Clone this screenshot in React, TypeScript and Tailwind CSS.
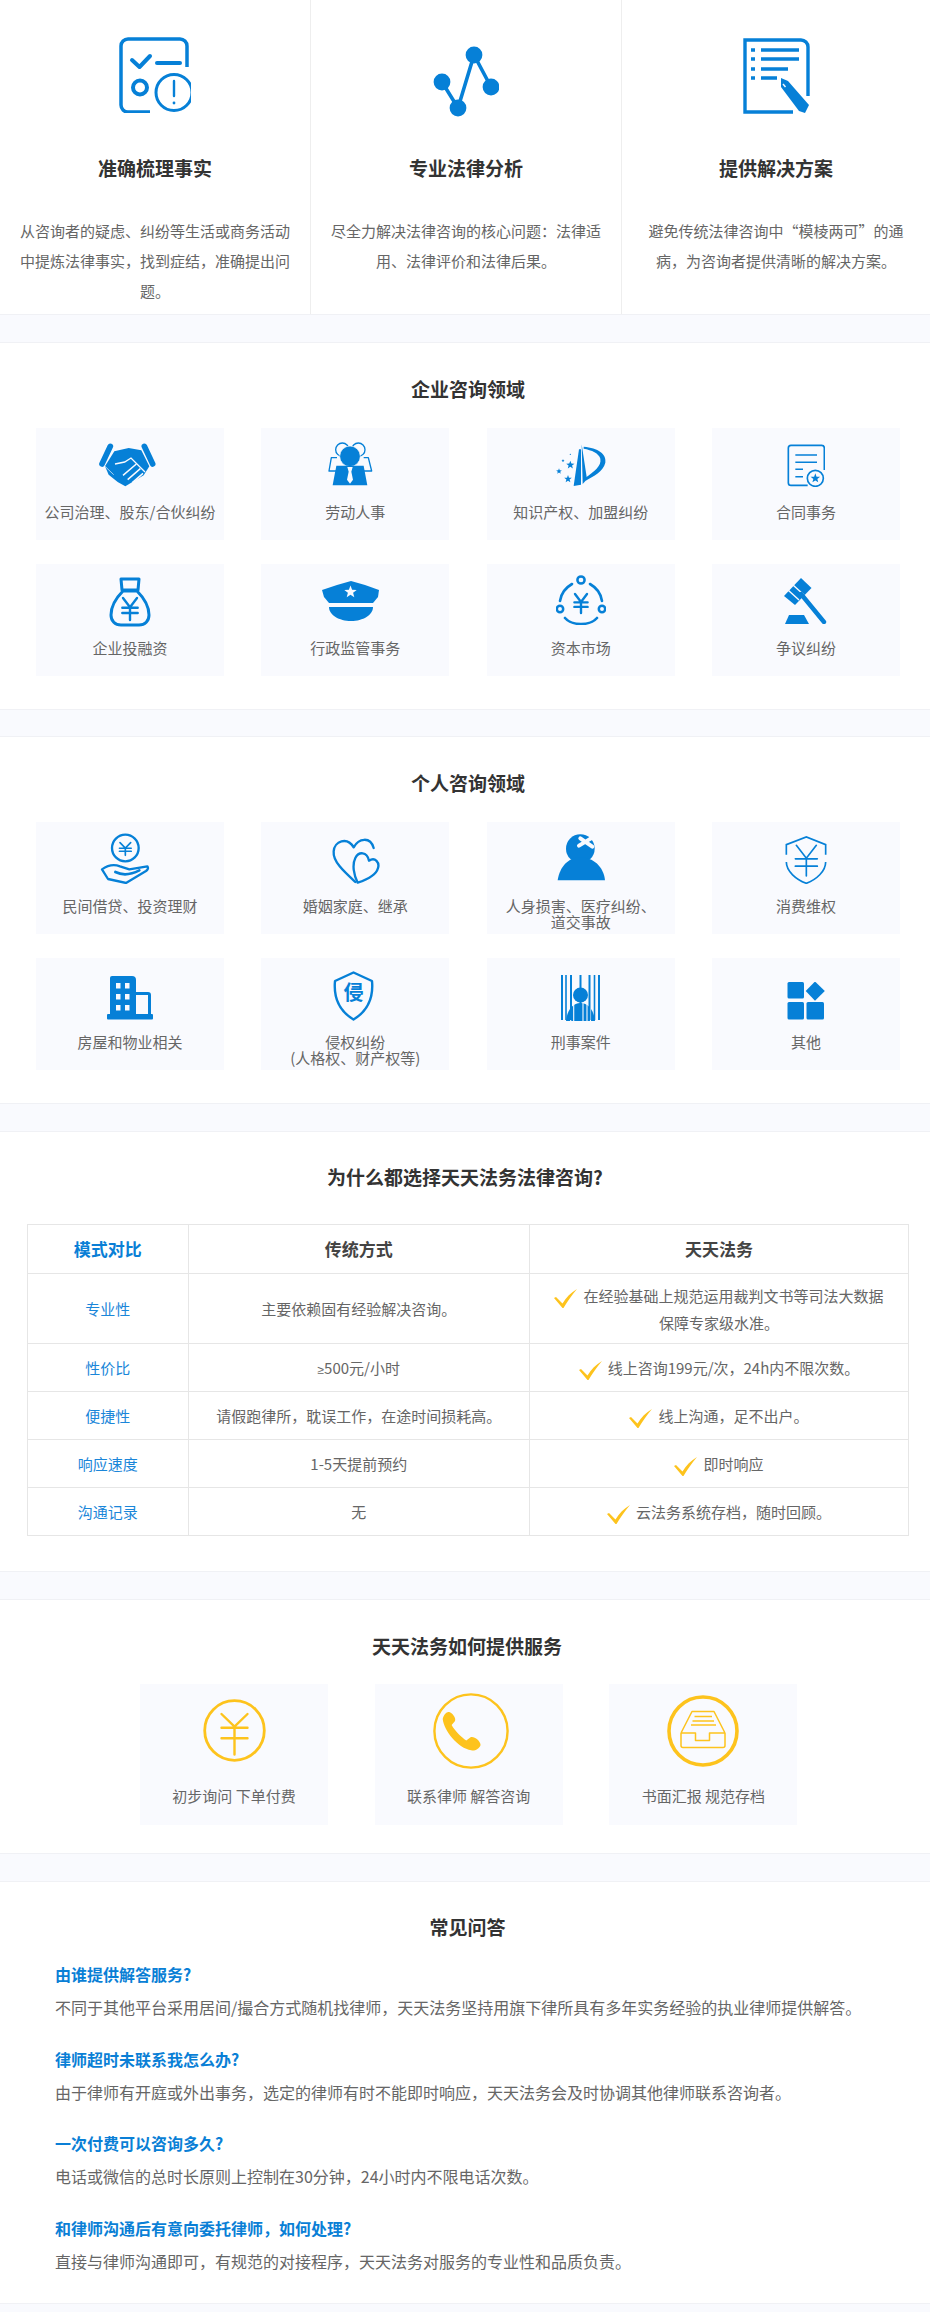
import React from "react";

const B = "#0680d7";
const Y = "#fdc31d";
const BG = "#f9fafe";

function star(cx: number, cy: number, r: number) {
  const pts: string[] = [];
  for (let i = 0; i < 10; i++) {
    const a = -Math.PI / 2 + (i * Math.PI) / 5;
    const rr = i % 2 === 0 ? r : r * 0.42;
    pts.push(`${(cx + rr * Math.cos(a)).toFixed(1)},${(cy + rr * Math.sin(a)).toFixed(1)}`);
  }
  return pts.join(" ");
}

type SP = { className?: string };

const Accurate = ({ className }: SP) => (
  <svg className={className} width="72" height="76" viewBox="0 0 72 76" fill="none" stroke={B} strokeLinecap="round" strokeLinejoin="round">
    <path d="M68 30V9a7 7 0 0 0-7-7H9a7 7 0 0 0-7 7v59a7 7 0 0 0 7 7h22" strokeWidth="3.5" strokeLinecap="butt" />
    <path d="M13 23l7.5 7L31 19" strokeWidth="4" />
    <path d="M38 26h23" strokeWidth="4" />
    <circle cx="21" cy="50.5" r="7" strokeWidth="4" />
    <circle cx="55" cy="55.5" r="18" strokeWidth="3" />
    <path d="M55 44v15" strokeWidth="2.4" />
    <circle cx="55" cy="66" r="1.4" fill={B} stroke="none" />
  </svg>
);
const Graph = ({ className }: SP) => (
  <svg className={className} width="66" height="72" viewBox="0 0 66 72" fill={B} stroke={B}>
    <path d="M9 36l16 26 16-53 17 32" fill="none" strokeWidth="3.6" />
    <g stroke="none">
      <circle cx="41" cy="9" r="8.4" />
      <circle cx="9" cy="36" r="8.4" />
      <circle cx="58" cy="41" r="8.4" />
      <circle cx="25" cy="62" r="8.4" />
    </g>
  </svg>
);
const Doc = ({ className }: SP) => (
  <svg className={className} width="67" height="76" viewBox="0 0 67 76" fill="none" stroke={B}>
    <path d="M50 74H2V2h56a7 7 0 0 1 7 7v49" strokeWidth="3.4" />
    <path d="M8 12h4M18 12h38M8 21h4M18 21h38M8 31h4M18 31h27M8 40h4M18 40h16" strokeWidth="3.6" />
    <path d="M38 40l7 3 21 24-4 8-6-2-18-24z" fill={B} stroke="none" />
    <path d="M40 46l2.5 3" stroke={BG} strokeWidth="1.4" />
  </svg>
);

const Handshake = ({ className }: SP) => (
  <svg className={className} width="60" height="45" viewBox="200 55 180 135" fill={B}>
    <path d="M240 65L215 118M342 65L367 118" stroke={B} strokeWidth="17" strokeLinecap="round" />
    <path d="M252 80L295 70L333 77L357 125L340 152L285 185L262 172L235 150L224 125Z" />
    <path d="M254 118L283 112L302 100L344 142" fill="none" stroke={BG} strokeWidth="4" />
    <path d="M278 152L318 118M292 165L330 132M306 174L338 146" fill="none" stroke={BG} strokeWidth="4.5" />
    <path d="M224 125L250 150" fill="none" stroke={BG} strokeWidth="2" />
  </svg>
);
const Worker = ({ className }: SP) => (
  <svg className={className} width="46" height="45" viewBox="892 48 138 135" fill="none" stroke={B}>
    <circle cx="938" cy="74" r="20" strokeWidth="4" />
    <circle cx="986" cy="74" r="20" strokeWidth="4" />
    <path d="M922 98H905L898 138H920M1002 98H1016L1026 138H1002" strokeWidth="4" strokeLinejoin="round" />
    <circle cx="961" cy="94" r="31" fill={B} stroke={BG} strokeWidth="2" />
    <path d="M920 122H1002L1013 181H909Z" fill={B} stroke="none" />
    <path d="M953 126H969L965 140L970 164L961 176L952 164L957 140Z" fill={BG} stroke="none" />
  </svg>
);
const IP = ({ className }: SP) => (
  <svg className={className} width="52" height="43" viewBox="166 42 156 129" fill={B}>
    <path d="M238 58L222 168L244 164V58Z" />
    <path d="M246 43L249 162L262 148Z" />
    <path d="M252 50C295 54 322 72 317 98C310 125 282 138 258 152L256 144C284 124 306 108 302 86C298 70 276 60 252 56Z" />
    <polygon points={star(212, 105, 13)} />
    <polygon points={star(205, 147, 12)} />
    <polygon points={star(178, 124, 9)} />
    <polygon points={star(190, 92, 5)} />
    <circle cx="212" cy="73" r="2" />
  </svg>
);
const Contract = ({ className }: SP) => (
  <svg className={className} width="38" height="43" viewBox="860 42 114 129" fill="none" stroke={B}>
    <path d="M922 166H872a8 8 0 0 1-8-8V54a8 8 0 0 1 8-8h92a8 8 0 0 1 8 8v66" strokeWidth="5" />
    <path d="M885 75H950M885 97H950M885 118H908M885 140H908" strokeWidth="4.5" />
    <circle cx="945" cy="145" r="24" strokeWidth="5" fill={BG} />
    <polygon points={star(945, 145, 15)} fill={B} stroke="none" />
  </svg>
);
const YenMarks = ({ x, y, w, h, sw, color }: { x: number; y: number; w: number; h: number; sw: number; color: string }) => (
  <path
    d={`M${x} ${y}L${x + w / 2} ${y + h * 0.42}L${x + w} ${y}M${x - w * 0.05} ${y + h * 0.44}H${x + w * 1.05}M${x - w * 0.05} ${y + h * 0.68}H${x + w * 1.05}M${x + w / 2} ${y + h * 0.42}V${y + h}`}
    fill="none"
    stroke={color}
    strokeWidth={sw}
    strokeLinecap="round"
  />
);
const Bag = ({ className }: SP) => (
  <svg className={className} width="42" height="50" viewBox="0 0 42 50" fill="none" stroke={B}>
    <path d="M12 2h18l-1 11H13z" strokeWidth="3" strokeLinejoin="round" />
    <path d="M14 14C7 21 2 29 2 38c0 6 4 10 10 10h18c6 0 10-4 10-10 0-9-5-17-12-24z" strokeWidth="3" />
    <YenMarks x={14} y={21} w={14} h={22} sw={2.4} color={B} />
  </svg>
);
const Cap = ({ className }: SP) => (
  <svg className={className} width="58" height="40" viewBox="0 0 58 40" fill={B}>
    <path d="M29 0L43 4L57 9L56 16L51 22H7L2 16L0 9L15 4Z" />
    <polygon points={star(28.5, 11, 6.5)} fill={BG} />
    <path d="M7 26H51C51 34 41 40 29 40C17 40 7 34 7 26Z" />
  </svg>
);
const Capital = ({ className }: SP) => (
  <svg className={className} width="50" height="50" viewBox="0 0 50 50" fill="none" stroke={B}>
    <circle cx="25" cy="5" r="3.6" strokeWidth="2.5" />
    <circle cx="4" cy="34" r="3.2" strokeWidth="2.5" />
    <circle cx="46" cy="34" r="3.2" strokeWidth="2.5" />
    <path d="M16 9C9 13 5 19 4 26M34 9C41 13 45 19 46 26M9 43C16 51 34 51 41 43" strokeWidth="2.6" strokeLinecap="round" />
    <YenMarks x={19} y={19} w={12} h={19} sw={2.4} color={B} />
  </svg>
);
const Gavel = ({ className }: SP) => (
  <svg className={className} width="44" height="46" viewBox="0 0 44 46" fill={B}>
    <path d="M17 0L27.5 10L11 27L0 18Z" />
    <path d="M4 12L15 22M9 7L20 17" stroke={BG} strokeWidth="1.4" />
    <path d="M17 16L40 44" stroke={B} strokeWidth="4.4" strokeLinecap="round" fill="none" />
    <path d="M5 37H20L25 46H1Z" />
  </svg>
);
const YenHand = ({ className }: SP) => (
  <svg className={className} width="50" height="52" viewBox="62 30 150 156" fill="none" stroke={B}>
    <circle cx="138" cy="78" r="40" strokeWidth="7" />
    <YenMarks x={122} y={62} w={32} h={38} sw={5} color={B} />
    <path d="M68 142C85 130 100 125 122 133L150 142L204 133C208 138 205 143 200 147L140 183L86 171Z" strokeWidth="7" strokeLinejoin="round" />
    <path d="M108 150C128 160 155 158 180 145" strokeWidth="8" strokeLinecap="round" />
  </svg>
);
const Hearts = ({ className }: SP) => (
  <svg className={className} width="49" height="48" viewBox="752 44 147 144" fill="none" stroke={B} strokeWidth="7" strokeLinecap="round" strokeLinejoin="round">
    <path d="M825 182C790 150 757 120 760 90C762 60 800 45 820 78C835 50 870 45 880 80" />
    <path d="M832 184C820 160 815 130 825 110C835 90 860 90 866 118C885 105 898 125 893 140C888 160 860 175 832 184Z" />
  </svg>
);
const Hurt = ({ className }: SP) => (
  <svg className={className} width="48" height="47" viewBox="110 42 144 141" fill={B}>
    <circle cx="180" cy="86" r="43" />
    <path d="M112 181C118 140 145 112 180 112C218 112 250 140 254 181Z" />
    <path d="M180 55L216 80M176 77L212 55" stroke={BG} strokeWidth="12" strokeLinecap="round" />
  </svg>
);
const ShieldYen = ({ className }: SP) => (
  <svg className={className} width="42" height="48" viewBox="796 44 126 144" fill="none" stroke={B} strokeWidth="5">
    <path d="M800 100V70L860 47L918 70V100" />
    <path d="M800 122C800 150 830 175 860 186C890 175 918 150 918 122" />
    <YenMarks x={830} y={72} w={60} h={92} sw={5} color={B} />
  </svg>
);
const Building = ({ className }: SP) => (
  <svg className={className} width="46" height="44" viewBox="0 0 46 44" fill={B}>
    <path d="M3 2a2 2 0 0 1 2-2h20a4 4 0 0 1 4 4v36H3z" />
    <path d="M29 17.5H41a1.5 1.5 0 0 1 1.5 1.5V40" fill="none" stroke={B} strokeWidth="3" />
    <rect x="0" y="38" width="46" height="5.5" rx="1" />
    <path d="M9 7h4.5v5.5H9zM18 7h4.5v5.5H18zM9 18h4.5v5.5H9zM18 18h4.5v5.5H18zM9 29h4.5v5.5H9zM18 29h4.5v5.5H18z" fill={BG} />
  </svg>
);
const ShieldQin = ({ className }: SP) => (
  <svg className={className} width="43" height="50" viewBox="0 0 43 50" fill="none" stroke={B}>
    <path d="M21.5 1.5L40 10C41.5 26 37 39 21.5 48.5C6 39 1.5 26 3 10Z" strokeWidth="2.4" strokeLinejoin="round" />
    <text x="21.5" y="29" textAnchor="middle" fontSize="20" fontWeight="700" fill={B} stroke="none" fontFamily="'Noto Sans CJK SC',sans-serif">侵</text>
  </svg>
);
const Prison = ({ className }: SP) => (
  <svg className={className} width="39" height="46" viewBox="0 0 39 46" fill={B}>
    <circle cx="19.5" cy="20" r="7.5" />
    <path d="M5 46C6 35 12 28 19.5 28C27 28 33 35 34 46Z" />
    <path d="M9.7 30V46M12.7 28V46M22 28V46M26 28V46M29.5 30V46" stroke={BG} strokeWidth="1.1" fill="none" />
    <path d="M1 0V45M10 0V45M19.5 0V45M28.5 0V45M38 0V45" stroke={B} strokeWidth="2" fill="none" />
    <path d="M5 0V45M33.5 0V45" stroke={B} strokeWidth="1.6" fill="none" />
  </svg>
);
const Other = ({ className }: SP) => (
  <svg className={className} width="38" height="38" viewBox="0 0 38 38" fill={B}>
    <rect x="0.5" y="0" width="16.5" height="16.5" rx="1.5" />
    <rect x="0.5" y="20" width="16.5" height="17.5" rx="1.5" />
    <rect x="19.5" y="20" width="17.5" height="17.5" rx="1.5" />
    <path d="M28 -0.5L37.8 9L28 18.8L18.7 9Z" />
  </svg>
);
const GoldYen = ({ className }: SP) => (
  <svg className={className} width="63" height="63" viewBox="0 0 63 63" fill="none" stroke={Y}>
    <circle cx="31.5" cy="31.5" r="29.8" strokeWidth="2.8" />
    <path d="M18.5 15L31.5 27.5L44.5 15M18.5 28.7H44.5M18.5 39.3H44.5M31.5 27.5V55.5" strokeWidth="2.4" strokeLinecap="round" />
  </svg>
);
const GoldPhone = ({ className }: SP) => (
  <svg className={className} width="76" height="76" viewBox="0 0 76 76" fill="none" stroke={Y}>
    <circle cx="38" cy="38" r="36.6" strokeWidth="2.4" />
    <path transform="translate(-251.6 -4) scale(0.357 0.333)" d="M732 90C735 75 745 65 752 70C762 75 770 90 766 97L757 108C765 125 785 145 798 155L810 145C818 140 838 155 838 168C835 180 820 187 812 184C775 178 735 125 732 90Z" fill={Y} stroke="none" />
  </svg>
);
const GoldTray = ({ className }: SP) => (
  <svg className={className} width="72" height="72" viewBox="0 0 72 72" fill="none" stroke={Y}>
    <circle cx="36" cy="36" r="34" strokeWidth="3.6" />
    <path d="M14 38L25 16.5H47L58 38M14 38V50.5A2 2 0 0 0 16 52.5H56A2 2 0 0 0 58 50.5V38H42.5V45.5H28.5V38Z" strokeWidth="1.5" strokeLinejoin="round" />
    <path d="M27.5 21.5H45M25.5 26H47M24 30H49" strokeWidth="1.5" />
  </svg>
);

const Check = () => (
  <svg className="inline-block align-[-6px] mr-[6px]" width="23" height="19" viewBox="0 0 23 19" fill={Y}>
    <path d="M0 9L2 8L8.5 14.5C12 8.5 17 3.5 23 0C18 6 13.5 12 9.5 19H8.5Z" />
  </svg>
);

type Item = { Icon: (p: SP) => React.ReactElement; cls: string; label: React.ReactNode };

const enterprise: Item[] = [
  { Icon: Handshake, cls: "mt-[15px] mr-[6px]", label: "公司治理、股东/合伙纠纷" },
  { Icon: Worker, cls: "mt-[13px] mr-[10px]", label: "劳动人事" },
  { Icon: IP, cls: "mt-[16px]", label: "知识产权、加盟纠纷" },
  { Icon: Contract, cls: "mt-[16px]", label: "合同事务" },
  { Icon: Bag, cls: "mt-[13px]", label: "企业投融资" },
  { Icon: Cap, cls: "mt-[17px] mr-[8px]", label: "行政监管事务" },
  { Icon: Capital, cls: "mt-[11px]", label: "资本市场" },
  { Icon: Gavel, cls: "mt-[14px]", label: "争议纠纷" },
];
const personal: Item[] = [
  { Icon: YenHand, cls: "mt-[10px] mr-[10px]", label: "民间借贷、投资理财" },
  { Icon: Hearts, cls: "mt-[14px]", label: "婚姻家庭、继承" },
  { Icon: Hurt, cls: "mt-[12px]", label: <>人身损害、医疗纠纷、<br />道交事故</> },
  { Icon: ShieldYen, cls: "mt-[14px]", label: "消费维权" },
  { Icon: Building, cls: "mt-[18px]", label: "房屋和物业相关" },
  { Icon: ShieldQin, cls: "mt-[13px] mr-[3px]", label: <>侵权纠纷<br />(人格权、财产权等)</> },
  { Icon: Prison, cls: "mt-[17px]", label: "刑事案件" },
  { Icon: Other, cls: "mt-[24px]", label: "其他" },
];

const Strip = ({ className }: SP) => <div className={className ?? "h-[29px] bg-[#f9fafe] border-y border-[#f0f1f5]"} />;

const Title = ({ children, className }: { children: React.ReactNode; className?: string }) => (
  <h2 className={`text-center text-[19px] leading-[30px] font-bold text-[#333] ${className ?? ""}`}>{children}</h2>
);

const Grid = ({ items }: { items: Item[] }) => (
  <div className="mt-[24px] ml-[36px] w-[864px] grid grid-cols-[repeat(4,188px)] justify-between gap-y-[24px]">
    {items.map((it, i) => (
      <div key={i} className="h-[112px] bg-[#f9fafe]">
        <div className="h-[76px] flex justify-center items-start">
          <it.Icon className={it.cls} />
        </div>
        <div className="text-center text-[15px] leading-[16px] text-[#666]">{it.label}</div>
      </div>
    ))}
  </div>
);

const features = [
  { Icon: Accurate, cls: "mt-[37px]", t: "准确梳理事实", d: "从咨询者的疑虑、纠纷等生活或商务活动中提炼法律事实，找到症结，准确提出问题。" },
  { Icon: Graph, cls: "mt-[46px]", t: "专业法律分析", d: "尽全力解决法律咨询的核心问题：法律适用、法律评价和法律后果。" },
  { Icon: Doc, cls: "mt-[38px]", t: "提供解决方案", d: "避免传统法律咨询中“模棱两可”的通病，为咨询者提供清晰的解决方案。" },
];

const rows: [string, React.ReactNode, React.ReactNode][] = [
  ["专业性", "主要依赖固有经验解决咨询。", <>在经验基础上规范运用裁判文书等司法大数据<br />保障专家级水准。</>],
  ["性价比", <><span className="font-['Liberation_Sans',sans-serif] text-[12px]">≥</span>500元/小时</>, "线上咨询199元/次，24h内不限次数。"],
  ["便捷性", "请假跑律所，耽误工作，在途时间损耗高。", "线上沟通，足不出户。"],
  ["响应速度", "1-5天提前预约", "即时响应"],
  ["沟通记录", "无", "云法务系统存档，随时回顾。"],
];
const rowH = ["h-[70px]", "h-[48px]", "h-[48px]", "h-[48px]", "h-[48px]"];

const faqs = [
  ["由谁提供解答服务?", "不同于其他平台采用居间/撮合方式随机找律师，天天法务坚持用旗下律所具有多年实务经验的执业律师提供解答。"],
  ["律师超时未联系我怎么办?", "由于律师有开庭或外出事务，选定的律师有时不能即时响应，天天法务会及时协调其他律师联系咨询者。"],
  ["一次付费可以咨询多久?", "电话或微信的总时长原则上控制在30分钟，24小时内不限电话次数。"],
  ["和律师沟通后有意向委托律师，如何处理?", "直接与律师沟通即可，有规范的对接程序，天天法务对服务的专业性和品质负责。"],
];

const services = [
  { Icon: GoldYen, cls: "mt-[15px]", l: "初步询问 下单付费" },
  { Icon: GoldPhone, cls: "mt-[9px] ml-[4px]", l: "联系律师 解答咨询" },
  { Icon: GoldTray, cls: "mt-[11px]", l: "书面汇报 规范存档" },
];

export default function App() {
  return (
    <div className="w-[930px] h-[2312px] overflow-hidden bg-white font-['Noto_Sans_CJK_SC',sans-serif] text-[#666]">
      <section className="h-[314px] grid grid-cols-[311px_311px_308px]">
        {features.map((f, i) => (
          <div key={i} className={i < 2 ? "border-r border-[#eeeeee] px-[15px]" : "px-[15px]"}>
            <div className="h-[113px] flex justify-center items-start">
              <f.Icon className={f.cls} />
            </div>
            <h3 className="mt-[40px] text-center text-[19px] leading-[30px] font-bold text-[#333]">{f.t}</h3>
            <p className="mt-[33px] text-center text-[15px] leading-[30px] text-[#666]">{f.d}</p>
          </div>
        ))}
      </section>
      <Strip />
      <section className="h-[366px] pt-[31px]">
        <Title className="pl-[6px]">企业咨询领域</Title>
        <Grid items={enterprise} />
      </section>
      <Strip className="h-[28px] bg-[#f9fafe] border-y border-[#f0f1f5]" />
      <section className="h-[366px] pt-[31px]">
        <Title className="pl-[6px]">个人咨询领域</Title>
        <Grid items={personal} />
      </section>
      <Strip />
      <section className="h-[439px] pt-[30px]">
        <Title>为什么都选择天天法务法律咨询?</Title>
        <table className="mt-[32px] ml-[27px] w-[882px] table-fixed border-collapse text-center text-[15px]">
          <colgroup>
            <col className="w-[160.5px]" />
            <col className="w-[341.5px]" />
            <col />
          </colgroup>
          <thead>
            <tr className="h-[49px] text-[17px] font-bold text-[#444]">
              <th className="border border-[#e6e6e6] text-[#0a7fd6]">模式对比</th>
              <th className="border border-[#e6e6e6]">传统方式</th>
              <th className="border border-[#e6e6e6]">天天法务</th>
            </tr>
          </thead>
          <tbody>
            {rows.map((r, i) => (
              <tr key={i} className={rowH[i]}>
                <td className="pt-[1px] border border-[#e6e6e6] text-[#1a86d9]">{r[0]}</td>
                <td className="pt-[1px] border border-[#e6e6e6] text-[#666]">{r[1]}</td>
                <td className="border border-[#e6e6e6] text-[#666] leading-[27px]">
                  <Check />
                  {r[2]}
                </td>
              </tr>
            ))}
          </tbody>
        </table>
      </section>
      <Strip />
      <section className="h-[253px] pt-[31px]">
        <Title className="pl-[4px]">天天法务如何提供服务</Title>
        <div className="mt-[23px] ml-[140px] flex gap-x-[46.7px]">
          {services.map((s, i) => (
            <div key={i} className="w-[188px] h-[141px] bg-[#f9fafe]">
              <div className="h-[104px] flex justify-center items-start">
                <s.Icon className={s.cls} />
              </div>
              <div className="text-center text-[15px] leading-[16px] text-[#666]">{s.l}</div>
            </div>
          ))}
        </div>
      </section>
      <Strip />
      <section className="h-[421px] pt-[30px] px-[55px]">
        <Title className="pl-[5px]">常见问答</Title>
        <div className="mt-[20px]">
          {faqs.map((f, i) => (
            <div key={i} className="mb-[27.5px]">
              <h4 className="text-[16px] leading-[24px] font-bold text-[#0a7fd6]">{f[0]}</h4>
              <p className="mt-[9px] text-[16px] leading-[24px] text-[#666]">{f[1]}</p>
            </div>
          ))}
        </div>
      </section>
      <div className="h-[9px] bg-[#f9fafe] border-t border-[#f0f1f5]" />
    </div>
  );
}
